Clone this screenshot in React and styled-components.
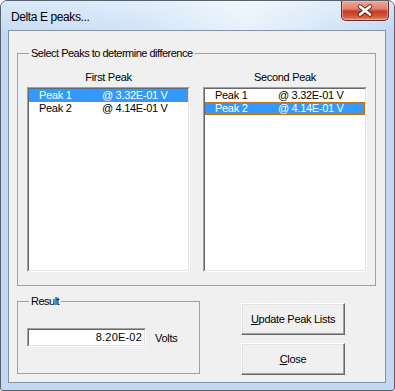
import React from "react";
import styled, { createGlobalStyle } from "styled-components";

const Global = createGlobalStyle`
  html, body { margin: 0; padding: 0; background: #ffffff; }
  body { font-family: "Liberation Sans", Arial, sans-serif; }
  * { box-sizing: border-box; }
`;

const Window = styled.div`
  width: 395px;
  height: 391px;
  border: 1px solid #56626e;
  border-radius: 7px 7px 3px 3px;
  overflow: hidden;
  background: #c3d9f2;
  display: flex;
  flex-direction: column;
`;

const TitleBar = styled.div`
  height: 29px;
  flex: none;
  display: flex;
  align-items: flex-start;
  padding-left: 10px;
  background:
    linear-gradient(180deg, rgba(255,255,255,0.35) 0%, rgba(255,255,255,0) 100%),
    linear-gradient(90deg, #c6dcf4 0%, #d2e4f8 35%, #e9f2fc 62%, #dbe9f8 78%, #c3d9f2 100%);
`;

const Title = styled.span`
  margin-top: 9px;
  font-size: 12px;
  line-height: 15px;
  letter-spacing: -0.4px;
  color: #000;
`;

const CloseBox = styled.div`
  margin-left: auto;
  margin-right: 5px;
  width: 48px;
  height: 20px;
  border: 1px solid #6e2a22;
  border-top: none;
  border-radius: 0 0 5px 5px;
  background: linear-gradient(180deg, #eba89a 0%, #de8470 40%, #c43c26 55%, #cf5838 80%, #e28a6a 100%);
  box-shadow: inset 0 0 0 1px rgba(255, 200, 190, 0.5);
  display: flex;
  align-items: center;
  justify-content: center;
`;

const Frame = styled.div`
  flex: 1;
  padding: 0 8px 7px 7px;
  display: flex;
`;

const Client = styled.div`
  flex: 1;
  border: 1px solid #8494a6;
  background: #f0f0f0;
  padding: 22px 8px 0 8px;
  font-size: 11px;
  color: #000;
`;

const Group = styled.div`
  position: relative;
  border: 1px solid #a0a0a0;
  width: ${(p) => p.$w}px;
  height: ${(p) => p.$h}px;
  padding: ${(p) => p.$pad};
`;

const GroupLabel = styled.span`
  position: absolute;
  top: -8px;
  left: 11px;
  padding: 0 2px;
  background: #f0f0f0;
  line-height: 14px;
  letter-spacing: -0.5px;
`;

const Columns = styled.div`
  display: grid;
  grid-template-columns: 163px 164px;
  column-gap: 13px;
`;

const Column = styled.div`
  display: flex;
  flex-direction: column;
`;

const ColHeader = styled.div`
  text-align: center;
  line-height: 14px;
  letter-spacing: -0.3px;
  margin-bottom: 3px;
`;

const SunkenOuter = styled.div`
  border: 1px solid;
  border-color: #a0a0a0 #ffffff #ffffff #a0a0a0;
  height: ${(p) => p.$h}px;
  width: ${(p) => (p.$w ? `${p.$w}px` : "auto")};
`;

const SunkenInner = styled.div`
  border: 1px solid;
  border-color: #696969 #e3e3e3 #e3e3e3 #696969;
  background: #ffffff;
  height: 100%;
`;

const Item = styled.div`
  display: flex;
  height: 13px;
  line-height: 11px;
  padding-left: 9px;
  letter-spacing: -0.3px;
  white-space: pre;
  background: ${(p) => (p.$sel ? "#3399ff" : "transparent")};
  color: ${(p) => (p.$sel ? "#ffffff" : "#000000")};
  border: 1px ${(p) => (p.$focus ? "dotted #cc6600" : "solid transparent")};
`;

const ItemName = styled.span`
  width: 63px;
`;

const BottomRow = styled.div`
  display: flex;
  align-items: flex-start;
  margin-top: 15px;
`;

const ResultLine = styled.div`
  display: flex;
  align-items: center;
`;

const ValueText = styled.div`
  height: 100%;
  text-align: right;
  line-height: 15px;
  padding-right: 2px;
  letter-spacing: 0.2px;
`;

const Unit = styled.span`
  margin-left: 9px;
  letter-spacing: -0.3px;
`;

const ButtonCol = styled.div`
  display: flex;
  flex-direction: column;
  gap: 8px;
  margin-left: 41px;
  margin-top: 2px;
`;

const Button = styled.button`
  width: 104px;
  height: 32px;
  padding: 0;
  font-family: "Liberation Sans", Arial, sans-serif;
  font-size: 11px;
  letter-spacing: -0.3px;
  color: #000;
  background: #f0f0f0;
  border: 1px solid;
  border-color: #ffffff #696969 #696969 #ffffff;
  box-shadow: inset -1px -1px 0 #a0a0a0, inset 1px 1px 0 #e3e3e3;
  text-align: center;
`;

const Key = styled.span`
  text-decoration: underline;
`;

const peaks = [
  { name: "Peak 1", value: "@ 3.32E-01 V" },
  { name: "Peak 2", value: "@ 4.14E-01 V" },
];

function PeakList({ title, selected, focus }) {
  return (
    <Column>
      <ColHeader>{title}</ColHeader>
      <SunkenOuter $h={185}>
        <SunkenInner>
          {peaks.map((p, i) => (
            <Item key={p.name} $sel={i === selected} $focus={focus && i === selected}>
              <ItemName>{p.name}</ItemName>
              <span>{p.value}</span>
            </Item>
          ))}
        </SunkenInner>
      </SunkenOuter>
    </Column>
  );
}

export default function App() {
  return (
    <>
      <Global />
      <Window>
        <TitleBar>
          <Title>Delta E peaks...</Title>
          <CloseBox>
            <svg width="16" height="13" viewBox="0 0 16 13">
              <path d="M3 2.5 L13 10.5 M13 2.5 L3 10.5" stroke="#5a1e16" strokeWidth="4.4" strokeLinecap="round" />
              <path d="M3 2.5 L13 10.5 M13 2.5 L3 10.5" stroke="#ffffff" strokeWidth="2.8" strokeLinecap="round" />
            </svg>
          </CloseBox>
        </TitleBar>
        <Frame>
          <Client>
            <Group $w={359} $h={233} $pad="16px 8px 0 9px">
              <GroupLabel>Select Peaks to determine difference</GroupLabel>
              <Columns>
                <PeakList title="First Peak" selected={0} />
                <PeakList title="Second Peak" selected={1} focus />
              </Columns>
            </Group>
            <BottomRow>
              <Group $w={183} $h={73} $pad="26px 0 0 9px">
                <GroupLabel>Result</GroupLabel>
                <ResultLine>
                  <SunkenOuter $h={19} $w={119}>
                    <SunkenInner>
                      <ValueText>8.20E-02</ValueText>
                    </SunkenInner>
                  </SunkenOuter>
                  <Unit>Volts</Unit>
                </ResultLine>
              </Group>
              <ButtonCol>
                <Button>
                  <Key>U</Key>pdate Peak Lists
                </Button>
                <Button>
                  <Key>C</Key>lose
                </Button>
              </ButtonCol>
            </BottomRow>
          </Client>
        </Frame>
      </Window>
    </>
  );
}
